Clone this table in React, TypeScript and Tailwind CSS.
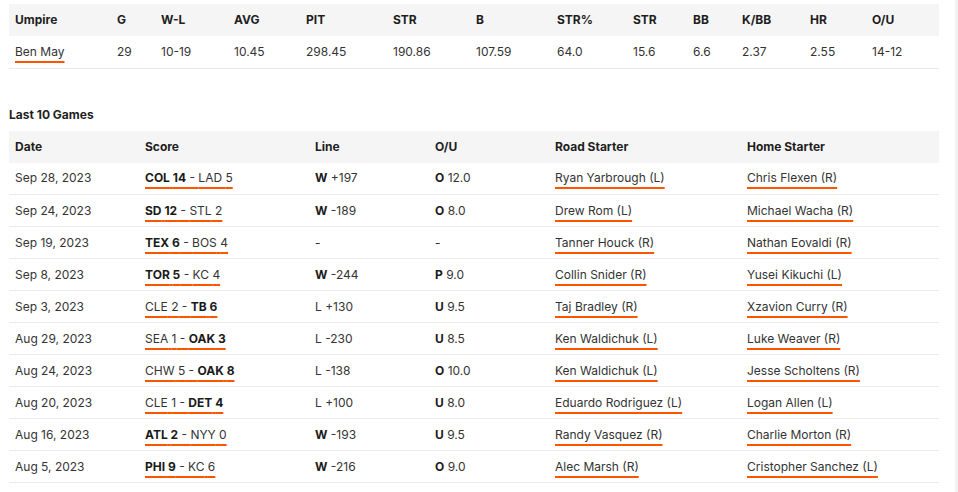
import React from 'react'

type Game = {
  date: string
  road: string
  roadScore: number
  home: string
  homeScore: number
  result: string
  line: string
  ouType: string
  ou: string
  roadStarter: string
  homeStarter: string
}

const games: Game[] = [
  { date: 'Sep 28, 2023', road: 'COL', roadScore: 14, home: 'LAD', homeScore: 5, result: 'W', line: '+197', ouType: 'O', ou: '12.0', roadStarter: 'Ryan Yarbrough (L)', homeStarter: 'Chris Flexen (R)' },
  { date: 'Sep 24, 2023', road: 'SD', roadScore: 12, home: 'STL', homeScore: 2, result: 'W', line: '-189', ouType: 'O', ou: '8.0', roadStarter: 'Drew Rom (L)', homeStarter: 'Michael Wacha (R)' },
  { date: 'Sep 19, 2023', road: 'TEX', roadScore: 6, home: 'BOS', homeScore: 4, result: '', line: '', ouType: '', ou: '', roadStarter: 'Tanner Houck (R)', homeStarter: 'Nathan Eovaldi (R)' },
  { date: 'Sep 8, 2023', road: 'TOR', roadScore: 5, home: 'KC', homeScore: 4, result: 'W', line: '-244', ouType: 'P', ou: '9.0', roadStarter: 'Collin Snider (R)', homeStarter: 'Yusei Kikuchi (L)' },
  { date: 'Sep 3, 2023', road: 'CLE', roadScore: 2, home: 'TB', homeScore: 6, result: 'L', line: '+130', ouType: 'U', ou: '9.5', roadStarter: 'Taj Bradley (R)', homeStarter: 'Xzavion Curry (R)' },
  { date: 'Aug 29, 2023', road: 'SEA', roadScore: 1, home: 'OAK', homeScore: 3, result: 'L', line: '-230', ouType: 'U', ou: '8.5', roadStarter: 'Ken Waldichuk (L)', homeStarter: 'Luke Weaver (R)' },
  { date: 'Aug 24, 2023', road: 'CHW', roadScore: 5, home: 'OAK', homeScore: 8, result: 'L', line: '-138', ouType: 'O', ou: '10.0', roadStarter: 'Ken Waldichuk (L)', homeStarter: 'Jesse Scholtens (R)' },
  { date: 'Aug 20, 2023', road: 'CLE', roadScore: 1, home: 'DET', homeScore: 4, result: 'L', line: '+100', ouType: 'U', ou: '8.0', roadStarter: 'Eduardo Rodriguez (L)', homeStarter: 'Logan Allen (L)' },
  { date: 'Aug 16, 2023', road: 'ATL', roadScore: 2, home: 'NYY', homeScore: 0, result: 'W', line: '-193', ouType: 'U', ou: '9.5', roadStarter: 'Randy Vasquez (R)', homeStarter: 'Charlie Morton (R)' },
  { date: 'Aug 5, 2023', road: 'PHI', roadScore: 9, home: 'KC', homeScore: 6, result: 'W', line: '-216', ouType: 'O', ou: '9.0', roadStarter: 'Alec Marsh (R)', homeStarter: 'Cristopher Sanchez (L)' },
]

const umpireCols = [
  { label: 'Umpire', w: 'w-[102px]' },
  { label: 'G', w: 'w-[44px]' },
  { label: 'W-L', w: 'w-[73px]' },
  { label: 'AVG', w: 'w-[72px]' },
  { label: 'PIT', w: 'w-[87px]' },
  { label: 'STR', w: 'w-[83px]' },
  { label: 'B', w: 'w-[81px]' },
  { label: 'STR%', w: 'w-[76px]' },
  { label: 'STR', w: 'w-[60px]' },
  { label: 'BB', w: 'w-[49px]' },
  { label: 'K/BB', w: 'w-[68px]' },
  { label: 'HR', w: 'w-[62px]' },
  { label: 'O/U', w: 'w-[73px]' },
]

const umpireStats = ['29', '10-19', '10.45', '298.45', '190.86', '107.59', '64.0', '15.6', '6.6', '2.37', '2.55', '14-12']

const gameCols = [
  { label: 'Date', w: 'w-[130px]' },
  { label: 'Score', w: 'w-[170px]' },
  { label: 'Line', w: 'w-[120px]' },
  { label: 'O/U', w: 'w-[120px]' },
  { label: 'Road Starter', w: 'w-[192px]' },
  { label: 'Home Starter', w: 'w-[198px]' },
]

const linkCls = 'underline decoration-2 decoration-[#ff5500] underline-offset-[5px] [text-decoration-skip-ink:none] cursor-pointer'

const cell = 'h-[32px] px-[6px] text-left align-middle whitespace-nowrap'

const App: React.FC = () => {
  return (
    <div className="flex min-h-[492px] bg-white font-['Inter',sans-serif] text-[12px] leading-4 text-[#333]">
      <div className="w-[955px] pl-[9px] pr-[16px] pt-[4px]">
        <table className="w-[930px] table-fixed border-collapse">
          <colgroup>
            {umpireCols.map((c, i) => (
              <col key={i} className={c.w} />
            ))}
          </colgroup>
          <thead>
            <tr className="bg-[#f5f5f5]">
              {umpireCols.map((c, i) => (
                <th key={i} className={`${cell} font-bold text-[#1e1e1e]`}>{c.label}</th>
              ))}
            </tr>
          </thead>
          <tbody>
            <tr className="border-b border-[#e9e9e9]">
              <td className={cell}>
                <a className={linkCls}>Ben May</a>
              </td>
              {umpireStats.map((s, i) => (
                <td key={i} className={cell}>{s}</td>
              ))}
            </tr>
          </tbody>
        </table>

        <h3 className="mt-[38px] mb-[8px] font-bold text-[#1e1e1e]">Last 10 Games</h3>

        <table className="w-[930px] table-fixed border-collapse">
          <colgroup>
            {gameCols.map((c, i) => (
              <col key={i} className={c.w} />
            ))}
          </colgroup>
          <thead>
            <tr className="bg-[#f5f5f5]">
              {gameCols.map((c, i) => (
                <th key={i} className={`${cell} font-bold text-[#1e1e1e]`}>{c.label}</th>
              ))}
            </tr>
          </thead>
          <tbody>
            {games.map((g, i) => {
              const roadWon = g.roadScore > g.homeScore
              return (
                <tr key={i} className="border-b border-[#e9e9e9]">
                  <td className={cell}>{g.date}</td>
                  <td className={cell}>
                    <a className={linkCls}>
                      <span className={roadWon ? 'font-bold text-[#1a1a1a]' : ''}>{g.road} {g.roadScore}</span>
                      {' - '}
                      <span className={!roadWon ? 'font-bold text-[#1a1a1a]' : ''}>{g.home} {g.homeScore}</span>
                    </a>
                  </td>
                  <td className={cell}>
                    {g.result ? (
                      <>
                        <span className={g.result === 'W' ? 'font-bold text-[#1a1a1a]' : ''}>{g.result}</span> {g.line}
                      </>
                    ) : (
                      '-'
                    )}
                  </td>
                  <td className={cell}>
                    {g.ouType ? (
                      <>
                        <span className="font-bold text-[#1a1a1a]">{g.ouType}</span> {g.ou}
                      </>
                    ) : (
                      '-'
                    )}
                  </td>
                  <td className={cell}>
                    <a className={linkCls}>{g.roadStarter}</a>
                  </td>
                  <td className={cell}>
                    <a className={linkCls}>{g.homeStarter}</a>
                  </td>
                </tr>
              )
            })}
          </tbody>
        </table>
      </div>
      <div className="w-[3px] bg-[#f1f1f1]" />
    </div>
  )
}

export default App
